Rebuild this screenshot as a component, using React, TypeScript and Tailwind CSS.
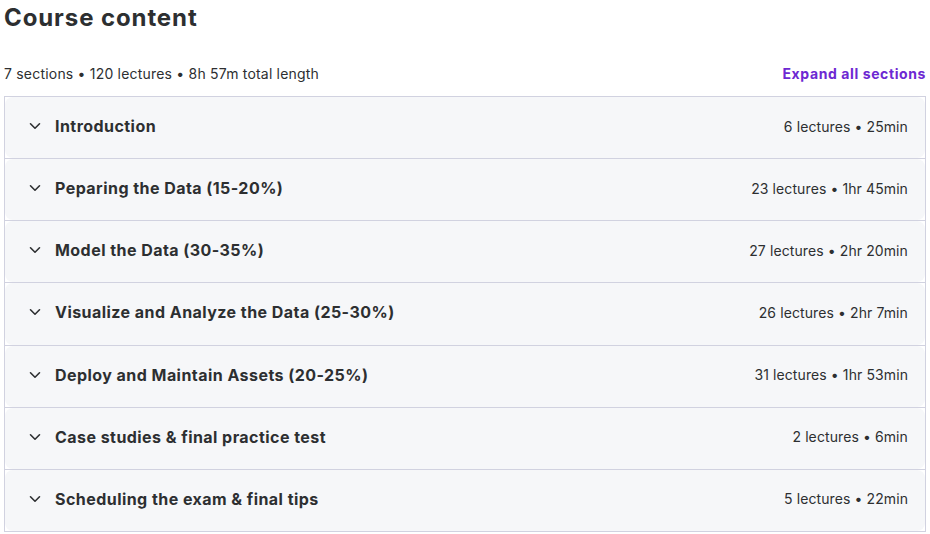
const sections = [
  { title: 'Introduction', meta: '6 lectures • 25min' },
  { title: 'Peparing the Data (15-20%)', meta: '23 lectures • 1hr 45min' },
  { title: 'Model the Data (30-35%)', meta: '27 lectures • 2hr 20min' },
  { title: 'Visualize and Analyze the Data (25-30%)', meta: '26 lectures • 2hr 7min' },
  { title: 'Deploy and Maintain Assets (20-25%)', meta: '31 lectures • 1hr 53min' },
  { title: 'Case studies & final practice test', meta: '2 lectures • 6min' },
  { title: 'Scheduling the exam & final tips', meta: '5 lectures • 22min' },
]

function Chevron() {
  return (
    <svg width="12" height="12" viewBox="0 0 12 12" fill="none" className="shrink-0 text-[#2d2f31]">
      <path d="M1.5 3.8 6 8.2l4.5-4.4" stroke="currentColor" strokeWidth="1.6" strokeLinecap="round" strokeLinejoin="round" />
    </svg>
  )
}

export default function App() {
  return (
    <div className="w-[930px] h-[534px] bg-white text-[#2d2f31] font-['Inter',sans-serif] px-[4px]">
      <h2 className="text-[24px] leading-[36px] font-bold tracking-[0.9px]">Course content</h2>
      <div className="flex items-center justify-between mt-[27px] h-[20px]">
        <span className="text-[14px] tracking-[0.2px]">7 sections • 120 lectures • 8h 57m total length</span>
        <button className="text-[14px] font-bold text-[#6d28d2] tracking-[0.6px]">Expand all sections</button>
      </div>
      <div className="mt-[13px] border border-[#d1d2e0]">
        {sections.map((s, i) => (
          <div key={i} className={i < sections.length - 1 ? 'border-b border-[#d1d2e0]' : ''}>
            <div className="flex items-center h-[61.15px] bg-[#f6f7f9] rounded-lg pl-[24px] pr-[17px] pb-[3px]">
              <Chevron />
              <span className="ml-[14px] text-[16px] font-bold tracking-[0.45px]">{s.title}</span>
              <span className="ml-auto text-[14px] tracking-[0.1px]">{s.meta}</span>
            </div>
          </div>
        ))}
      </div>
    </div>
  )
}
